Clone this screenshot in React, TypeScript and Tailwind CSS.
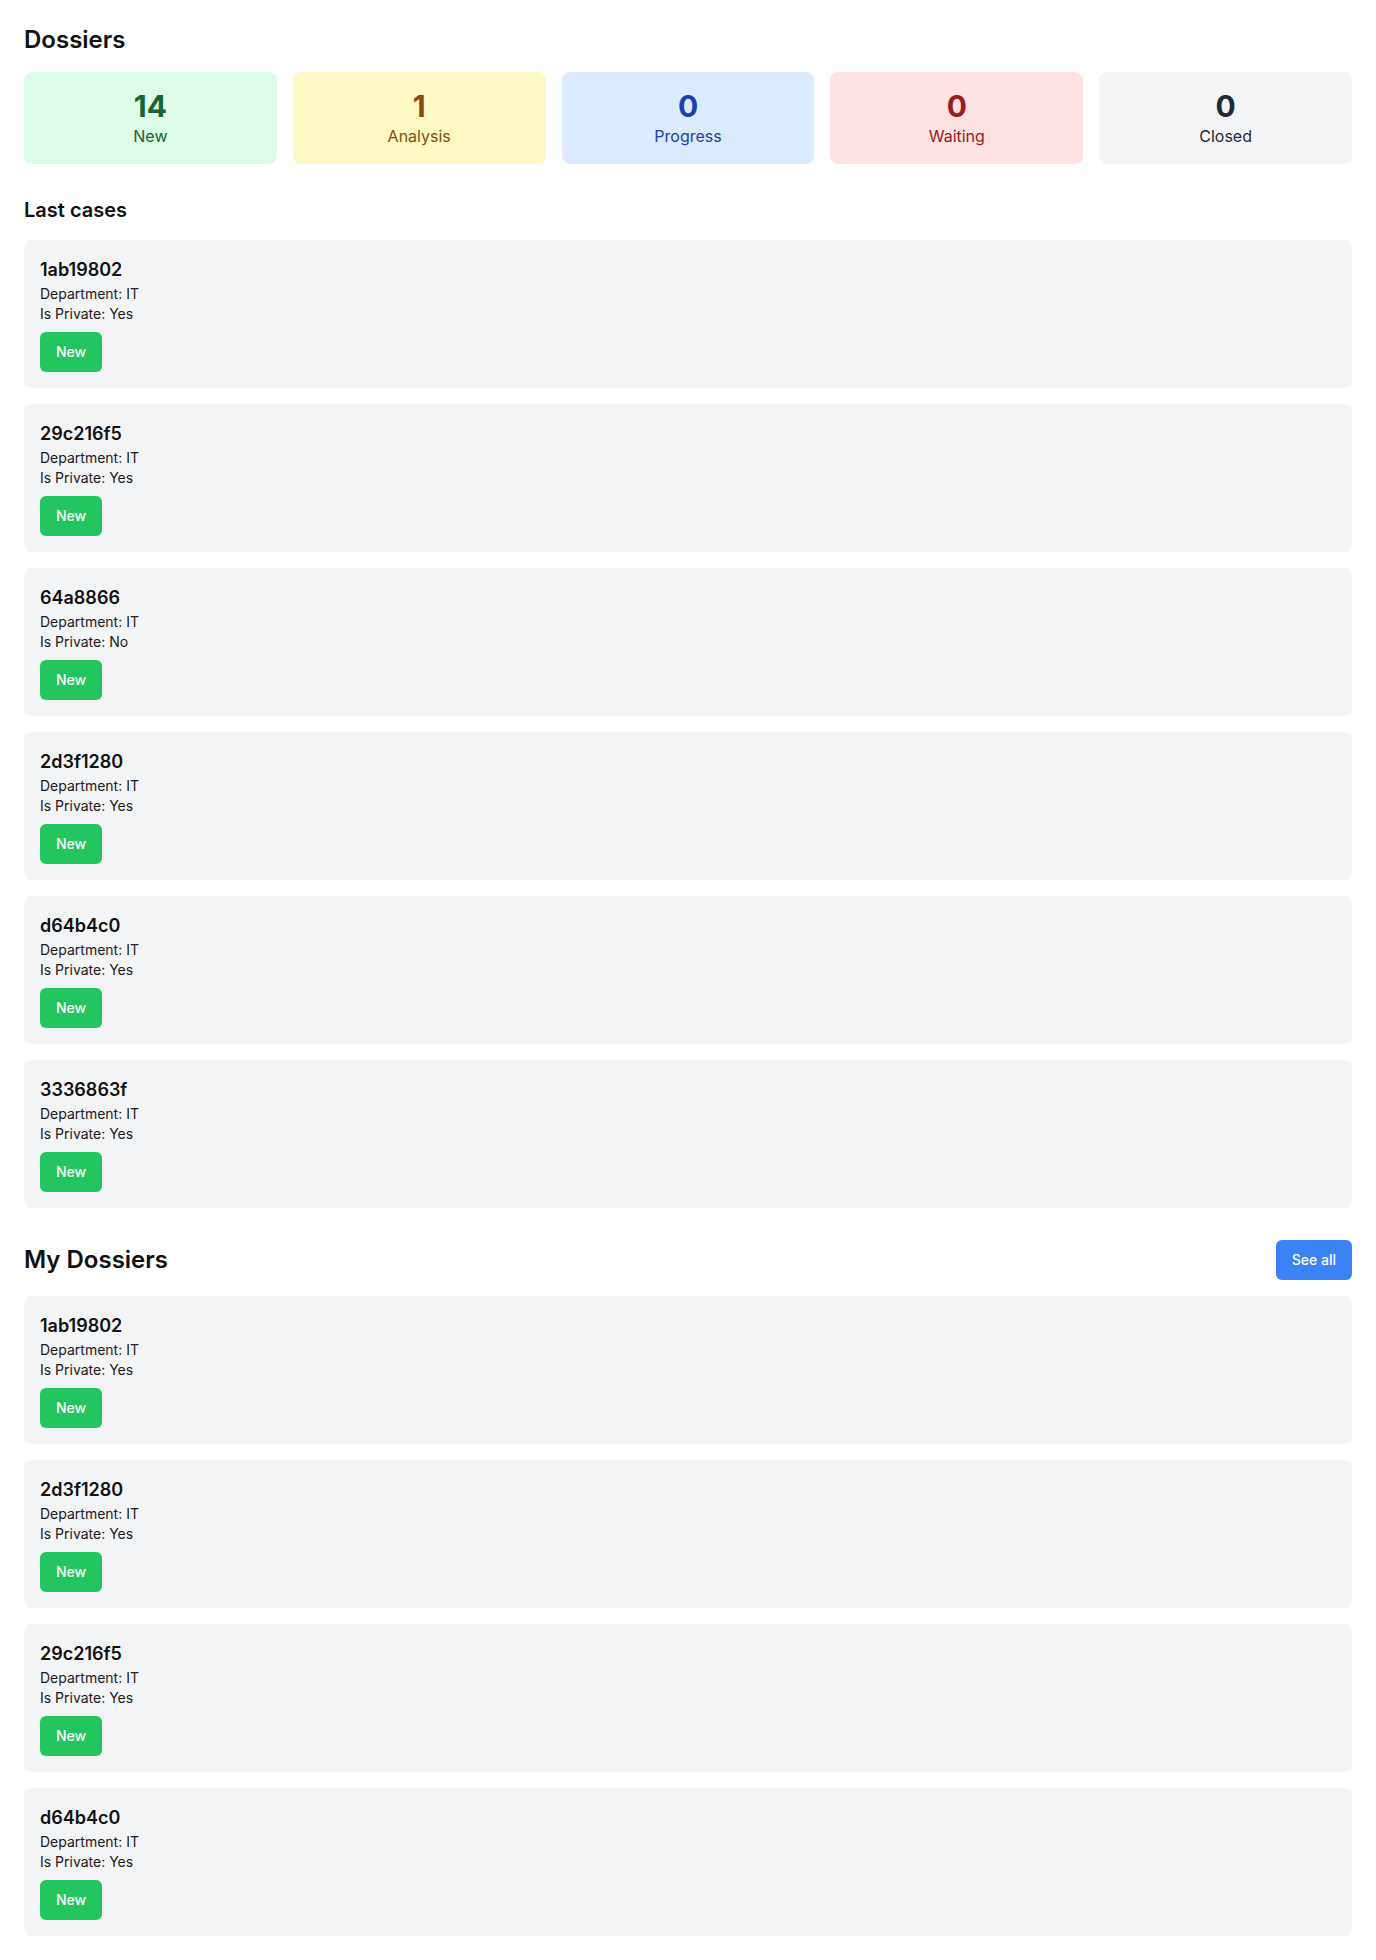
import React from "react";

interface Stat {
  value: number;
  label: string;
  box: string;
  text: string;
}

interface CaseItem {
  id: string;
  department: string;
  isPrivate: boolean;
  status: string;
}

const stats: Stat[] = [
  { value: 14, label: "New", box: "bg-[#dcfce7]", text: "text-[#166534]" },
  { value: 1, label: "Analysis", box: "bg-[#fef9c3]", text: "text-[#854d0e]" },
  { value: 0, label: "Progress", box: "bg-[#dbeafe]", text: "text-[#1e40af]" },
  { value: 0, label: "Waiting", box: "bg-[#fee2e2]", text: "text-[#991b1b]" },
  { value: 0, label: "Closed", box: "bg-[#f3f4f6]", text: "text-[#1f2937]" },
];

const lastCases: CaseItem[] = [
  { id: "1ab19802", department: "IT", isPrivate: true, status: "New" },
  { id: "29c216f5", department: "IT", isPrivate: true, status: "New" },
  { id: "64a8866", department: "IT", isPrivate: false, status: "New" },
  { id: "2d3f1280", department: "IT", isPrivate: true, status: "New" },
  { id: "d64b4c0", department: "IT", isPrivate: true, status: "New" },
  { id: "3336863f", department: "IT", isPrivate: true, status: "New" },
];

const myDossiers: CaseItem[] = [
  { id: "1ab19802", department: "IT", isPrivate: true, status: "New" },
  { id: "2d3f1280", department: "IT", isPrivate: true, status: "New" },
  { id: "29c216f5", department: "IT", isPrivate: true, status: "New" },
  { id: "d64b4c0", department: "IT", isPrivate: true, status: "New" },
];

function CaseCard({ item }: { item: CaseItem }) {
  return (
    <div className="bg-[#f3f4f6] rounded-lg p-4">
      <h3 className="text-lg font-semibold text-[#111111]">{item.id}</h3>
      <p className="text-sm text-[#1a1a1a]">Department: {item.department}</p>
      <p className="text-sm text-[#1a1a1a]">Is Private: {item.isPrivate ? "Yes" : "No"}</p>
      <button className="mt-2 px-4 py-2.5 rounded-md bg-[#22c55e] text-white text-sm font-medium">
        {item.status}
      </button>
    </div>
  );
}

export default function App() {
  return (
    <div className="min-h-screen bg-white p-6 font-['Inter',sans-serif] text-[#111111]">
      {/* Counters */}
      <h1 className="text-2xl font-semibold mb-4">Dossiers</h1>
      <div className="grid grid-cols-5 gap-4">
        {stats.map((s) => (
          <div key={s.label} className={`${s.box} ${s.text} rounded-lg p-4 text-center`}>
            <div className="text-3xl font-bold">{s.value}</div>
            <div className="text-base">{s.label}</div>
          </div>
        ))}
      </div>

      {/* Last cases */}
      <h2 className="text-xl font-semibold mt-8 mb-4">Last cases</h2>
      <div className="space-y-4">
        {lastCases.map((c, idx) => (
          <CaseCard key={idx} item={c} />
        ))}
      </div>

      {/* My dossiers */}
      <div className="flex items-center justify-between mt-8 mb-4">
        <h2 className="text-2xl font-semibold">My Dossiers</h2>
        <button className="px-4 py-2.5 rounded-md bg-[#3b82f6] text-white text-sm font-medium">
          See all
        </button>
      </div>
      <div className="space-y-4">
        {myDossiers.map((c, idx) => (
          <CaseCard key={idx} item={c} />
        ))}
      </div>
    </div>
  );
}
